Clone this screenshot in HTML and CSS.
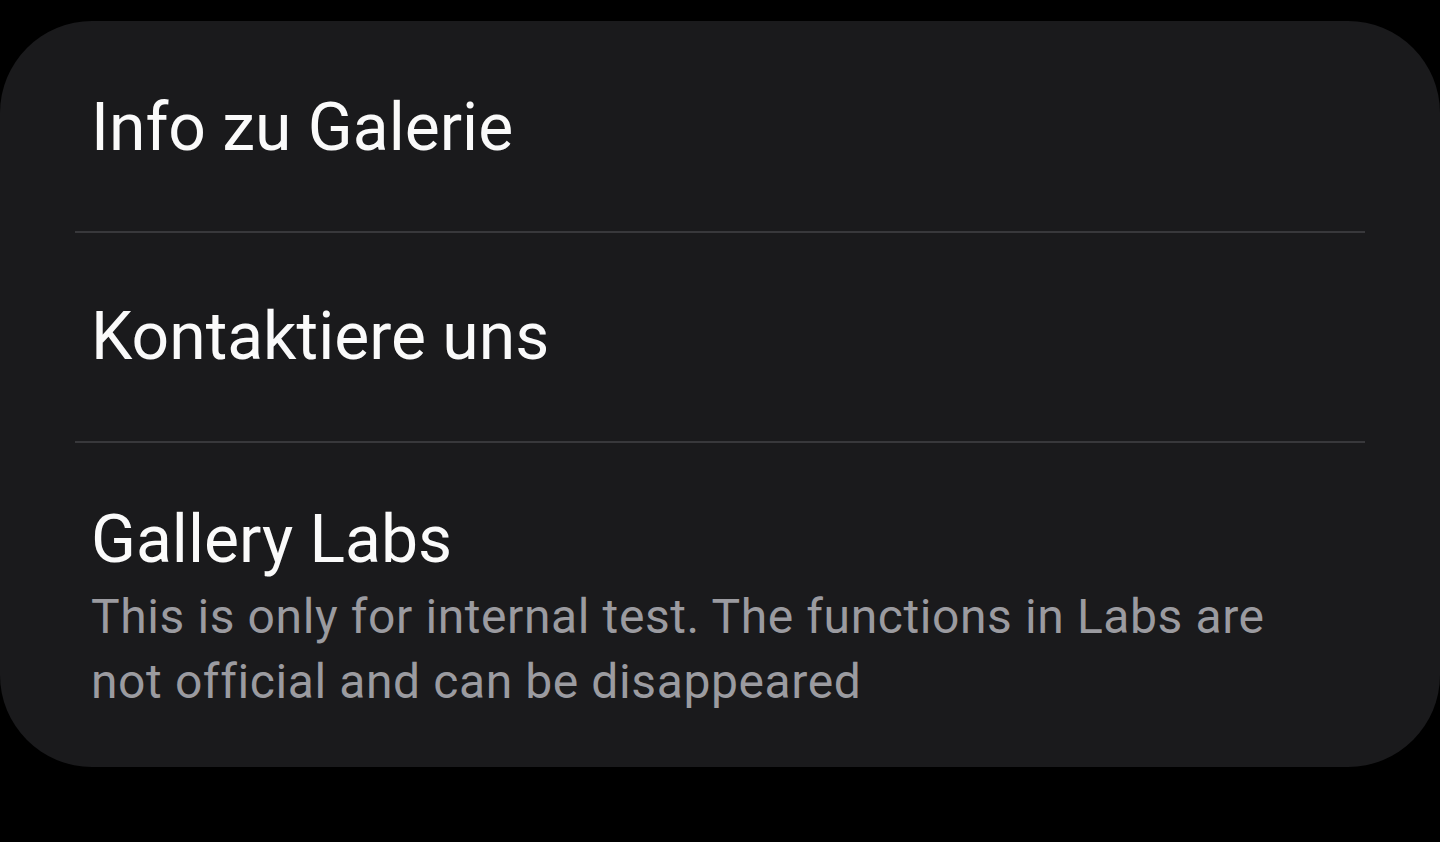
FILE: index.html
```html
<!DOCTYPE html>
<html lang="de">

<head>
    <meta charset="UTF-8">
    <meta name="viewport" content="width=device-width, initial-scale=1.0">
    <title>Einstellungen</title>
    <link rel="stylesheet" href="styles.css">
</head>

<body>
    <div class="card">
        <div class="item item-first">
            <div class="item-title">Info zu Galerie</div>
        </div>
        <div class="divider"></div>
        <div class="item">
            <div class="item-title">Kontaktiere uns</div>
        </div>
        <div class="divider"></div>
        <div class="item item-labs">
            <div class="item-title">Gallery Labs</div>
            <div class="item-sub">This is only for internal test. The functions in Labs are not official and can be disappeared</div>
        </div>
    </div>
</body>

</html>
```

FILE: styles.css
```css
body {
    margin: 0;
    background-color: #000;
    font-family: Roboto, "Open Sans", sans-serif;
    padding-top: 21px;
}

.card {
    background-color: #1a1a1c;
    border-radius: 92px;
    padding: 0 75px;
    height: 746px;
    box-sizing: border-box;
}

.item {
    height: 208px;
    display: flex;
    flex-direction: column;
    justify-content: center;
    padding: 0 16px;
    box-sizing: border-box;
}

.item-first {
    height: 210px;
    padding-top: 4px;
}

.item-title {
    font-size: 66px;
    color: #fafafa;
    line-height: 80px;
}

.item-labs {
    height: auto;
    padding-top: 57px;
}

.item-sub {
    font-size: 48px;
    letter-spacing: 0.6px;
    color: #9b9ba0;
    line-height: 65px;
    margin-top: 4px;
    max-width: 1200px;
}

.divider {
    height: 2px;
    background-color: #38383b;
}
```
